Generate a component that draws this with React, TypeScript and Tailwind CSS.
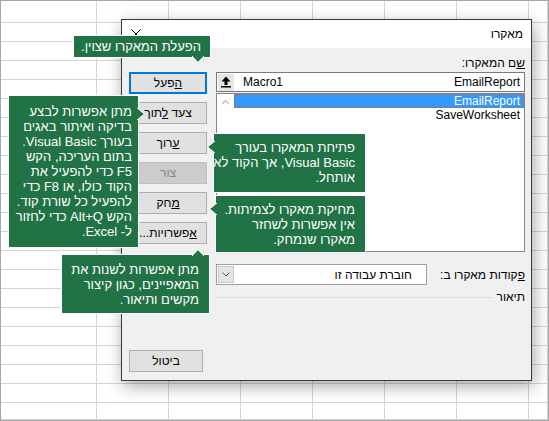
import React from "react";

const FONT = "font-['Liberation_Sans','DejaVu_Sans',sans-serif]";

// Spreadsheet grid behind the dialog
function SheetGrid() {
  const cells = Array.from({ length: 8 * 22 });
  return (
    <div className="grid h-full w-full grid-cols-[96px_repeat(6,72px)_1fr] grid-rows-[22px_repeat(20,19px)_1fr]">
      {cells.map((_, i) => (
        <div key={i} className="border-b border-r border-[#d4d4d4]" />
      ))}
    </div>
  );
}

function Btn({
  children,
  primary,
  disabled,
  className = "",
}: {
  children: React.ReactNode;
  primary?: boolean;
  disabled?: boolean;
  className?: string;
}) {
  const look = primary
    ? "border-2 border-[#0078d7] bg-[#e1e1e1] text-black"
    : disabled
    ? "border border-[#bfbfbf] bg-[#cccccc] text-[#838383]"
    : "border border-[#adadad] bg-[#e1e1e1] text-black";
  return (
    <div className={`flex h-[22px] items-center justify-center text-[12px] ${look} ${className}`}>
      <span className="whitespace-pre">{children}</span>
    </div>
  );
}

type Side = "down" | "up" | "left" | "right";

function Pointer({ side, at }: { side: Side; at: number }) {
  // small green arrow that sticks out of a callout edge
  if (side === "down")
    return (
      <svg className="absolute top-full -mt-px" style={{ left: at - 6 }} width="12" height="7" viewBox="0 0 12 7">
        <polygon points="0,0 12,0 6,6.5" fill="#217346" />
        <polyline points="0,0 6,6.5 12,0" fill="none" stroke="#ffffff" strokeWidth="1" />
        <rect x="1" y="0" width="10" height="1.2" fill="#217346" />
      </svg>
    );
  if (side === "up")
    return (
      <svg className="absolute bottom-full -mb-px" style={{ left: at - 6 }} width="12" height="7" viewBox="0 0 12 7">
        <polygon points="0,7 12,7 6,0.5" fill="#217346" />
        <polyline points="0,7 6,0.5 12,7" fill="none" stroke="#ffffff" strokeWidth="1" />
        <rect x="1" y="5.8" width="10" height="1.2" fill="#217346" />
      </svg>
    );
  if (side === "right")
    return (
      <svg className="absolute left-full -ml-px" style={{ top: at - 6 }} width="8" height="12" viewBox="0 0 8 12">
        <polygon points="0,0 0,12 7.5,6" fill="#217346" />
        <polyline points="0,0 7.5,6 0,12" fill="none" stroke="#ffffff" strokeWidth="1" />
        <rect x="0" y="1" width="1.2" height="10" fill="#217346" />
      </svg>
    );
  return (
    <svg className="absolute right-full -mr-px" style={{ top: at - 6 }} width="8" height="12" viewBox="0 0 8 12">
      <polygon points="8,0 8,12 0.5,6" fill="#217346" />
      <polyline points="8,0 0.5,6 8,12" fill="none" stroke="#ffffff" strokeWidth="1" />
      <rect x="6.8" y="1" width="1.2" height="10" fill="#217346" />
    </svg>
  );
}

function Callout({
  lines,
  className,
  side,
  at,
}: {
  lines: string[];
  className: string;
  side: Side;
  at: number;
}) {
  return (
    <div
      dir="rtl"
      className={`absolute border border-white bg-[#217346] text-[13px] leading-[15px] text-white ${className}`}
    >
      {lines.map((l, i) => (
        <div key={i} className="whitespace-nowrap">
          {l}
        </div>
      ))}
      <Pointer side={side} at={at} />
    </div>
  );
}

export default function App() {
  return (
    <div className={`relative h-[421px] w-[549px] overflow-hidden border border-[#a6a6a6] bg-white ${FONT}`}>
      <div className="absolute inset-0">
        <SheetGrid />
      </div>

      {/* Macro dialog */}
      <div
        dir="rtl"
        className="absolute left-[120px] top-[18px] flex h-[362px] w-[411px] flex-col border border-[#3a3a3a] bg-[#f0f0f0] shadow-[2px_5px_16px_rgba(0,0,0,0.35)]"
      >
        <div className="flex h-[28px] shrink-0 items-center justify-between bg-white pl-[9px] pr-[8px]">
          <span className="text-[12px] text-black">מאקרו</span>
          <svg width="10" height="10" viewBox="0 0 10 10">
            <path d="M0.5 0.5 L9.5 9.5 M9.5 0.5 L0.5 9.5" stroke="#000" strokeWidth="1" />
          </svg>
        </div>

        <div className="flex flex-1 flex-row gap-[9px] pb-[8px] pl-[7px] pr-[6px] pt-[6px] text-[12px] text-black">
          {/* names, list and options */}
          <div className="flex w-[309px] flex-col">
            <div className="h-[18px] leading-[18px]">
              <span className="underline">ש</span>ם המאקרו:
            </div>
            <div className="flex h-[20px] items-center border border-[#7a7a7a] bg-white">
              <span className="flex-1 pr-[4px]">EmailReport</span>
              <span dir="ltr" className="ml-[8px]">Macro1</span>
              <div className="mx-px flex h-[17px] w-[16px] items-center justify-center bg-[#e6e6e6]">
                <svg width="10" height="12" viewBox="0 0 10 12">
                  <polygon points="5,0.5 9.5,5.5 6.5,5.5 6.5,9 3.5,9 3.5,5.5 0.5,5.5" fill="#000" />
                  <rect x="0" y="10" width="10" height="1.5" fill="#000" />
                </svg>
              </div>
            </div>
            <div className="mt-px flex h-[159px] flex-row border border-[#828790] bg-white">
              <div className="flex flex-1 flex-col">
                <div className="flex h-[14px] items-center border border-dotted border-[#c2681c] bg-[#3399ff] pr-[3px] text-white">
                  EmailReport
                </div>
                <div className="flex h-[14px] items-center pr-[4px]">SaveWorksheet</div>
              </div>
              <div className="flex w-[17px] justify-center pt-[5px]">
                <svg width="9" height="6" viewBox="0 0 9 6">
                  <polyline points="1,5 4.5,1.5 8,5" fill="none" stroke="#c2c2c2" strokeWidth="1.4" />
                </svg>
              </div>
            </div>

            <div className="mt-[12px] flex h-[21px] flex-row items-center justify-between">
              <span>
                <span className="underline">פ</span>קודות מאקרו ב:
              </span>
              <div className="flex h-[21px] w-[211px] items-center border border-[#a0a0a0] bg-white">
                <span className="flex-1 pr-[14px]">חוברת עבודה זו</span>
                <div className="mx-px flex h-[17px] w-[16px] items-center justify-center border border-[#c8c8c8] bg-[#e5e5e5]">
                  <svg width="8" height="5" viewBox="0 0 8 5">
                    <polyline points="0.5,0.5 4,4 7.5,0.5" fill="none" stroke="#555" strokeWidth="1" />
                  </svg>
                </div>
              </div>
            </div>

            <div className="mt-[4px] flex h-[16px] flex-row items-center gap-[5px]">
              <span>תיאור</span>
              <div className="h-px flex-1 bg-[#dcdcdc]" />
            </div>
          </div>

          {/* command buttons */}
          <div className="flex w-[78px] flex-col gap-[8px] pt-[18px]">
            <Btn primary>
              <span className="underline">ה</span>פעל
            </Btn>
            <Btn>
              {"צעד "}
              <span className="underline">ל</span>תוך
            </Btn>
            <Btn>
              <span className="underline">ע</span>רוך
            </Btn>
            <Btn disabled>צור</Btn>
            <Btn>
              <span className="underline">מ</span>חק
            </Btn>
            <Btn>
              <span className="underline">א</span>פשרויות...
            </Btn>
            <Btn className="mt-auto w-[74px] self-end">ביטול</Btn>
          </div>
        </div>
      </div>

      {/* explanation callouts */}
      <Callout
        className="left-[72px] top-[34px] h-[23px] w-[138px] pr-[9px] pt-[3px]"
        side="down"
        at={124}
        lines={["הפעלת המאקרו שצוין."]}
      />
      <Callout
        className="left-[7px] top-[94px] h-[153px] w-[131px] pr-[6px] pt-[8px]"
        side="right"
        at={18}
        lines={[
          "מתן אפשרות לבצע",
          "בדיקה ואיתור באגים",
          "בעורך Visual Basic.",
          "בתום העריכה, הקש",
          "F5 כדי להפעיל את",
          "הקוד כולו, או F8 כדי",
          "להפעיל כל שורת קוד.",
          "הקש Alt+Q כדי לחזור",
          "ל- Excel.",
        ]}
      />
      <Callout
        className="left-[212px] top-[132px] h-[60px] w-[153px] pr-[10px] pt-[6px]"
        side="left"
        at={13}
        lines={["פתיחת המאקרו בעורך", "Visual Basic, אך הקוד לא", "אותחל."]}
      />
      <Callout
        className="left-[214px] top-[194px] h-[58px] w-[151px] pr-[10px] pt-[6px]"
        side="left"
        at={13}
        lines={["מחיקת מאקרו לצמיתות.", "אין אפשרות לשחזר", "מאקרו שנמחק."]}
      />
      <Callout
        className="left-[60px] top-[253px] h-[60px] w-[149px] pr-[10px] pt-[7px]"
        side="up"
        at={136}
        lines={["מתן אפשרות לשנות את", "המאפיינים, כגון קיצור", "מקשים ותיאור."]}
      />
    </div>
  );
}
